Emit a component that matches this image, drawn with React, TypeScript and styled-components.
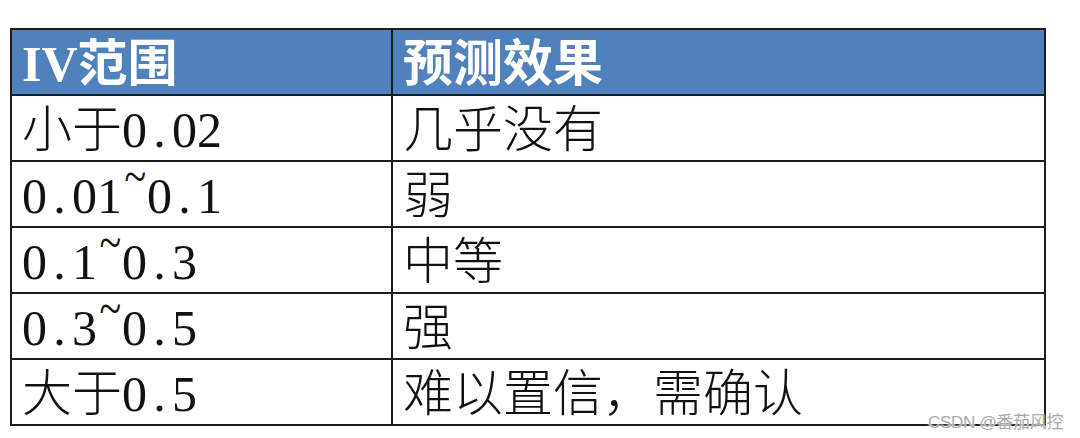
import React from "react"
import styled, { createGlobalStyle } from "styled-components"

const GlobalStyle = createGlobalStyle`
  html, body {
    margin: 0;
    padding: 0;
    background: #ffffff;
  }
`

const Page = styled.div`
  position: relative;
  width: 1080px;
  height: 438px;
  padding: 28px 0 0 10px;
  box-sizing: border-box;
  background: #ffffff;
  overflow: hidden;
`

const Table = styled.div`
  display: grid;
  grid-template-columns: 381px 653px;
  grid-auto-rows: 66px;
  border-top: 2px solid #1c1c1c;
  border-left: 2px solid #1c1c1c;
  width: max-content;
`

const Cell = styled.div<{ $head?: boolean }>`
  display: flex;
  align-items: center;
  box-sizing: border-box;
  padding: 4px 0 0 10px;
  border-right: 2px solid #1c1c1c;
  border-bottom: 2px solid #1c1c1c;
  background: ${(p) => (p.$head ? "#4f81bd" : "#ffffff")};
  color: ${(p) => (p.$head ? "#ffffff" : "#111111")};
  font-family: "Liberation Serif", "Noto Sans CJK SC", serif;
  font-size: 50px;
  font-weight: ${(p) => (p.$head ? 700 : 300)};
  line-height: 1;
  white-space: nowrap;
`

// half-width cell for digits and punctuation, like a SimSun grid
const Glyph = styled.span<{ $half: boolean }>`
  display: inline-block;
  width: ${(p) => (p.$half ? "0.5em" : "auto")};
  text-align: ${(p) => (p.$half ? "center" : "left")};
`

// SimSun draws the tilde high, at the top of the digits
const Tilde = styled.span`
  display: inline-block;
  width: 0.5em;
  text-align: center;
  line-height: 0.4;
  transform: translateY(-0.4em) scaleX(0.8);
`

const Watermark = styled.div`
  position: absolute;
  left: 928px;
  top: 408px;
  font-family: "Liberation Sans", "Noto Sans CJK SC", sans-serif;
  font-size: 17px;
  color: #a9a9a9;
  text-shadow: 0 0 2px #ffffff, 0 0 2px #ffffff;
  letter-spacing: -0.3px;
`

const rows = [
  ["小于0.02", "几乎没有"],
  ["0.01~0.1", "弱"],
  ["0.1~0.3", "中等"],
  ["0.3~0.5", "强"],
  ["大于0.5", "难以置信，需确认"],
]

const Text: React.FC<{ value: string }> = ({ value }) => (
  <>
    {Array.from(value).map((ch, i) =>
      ch === "~" ? (
        <Tilde key={i}>{ch}</Tilde>
      ) : (
        <Glyph key={i} $half={/[0-9.]/.test(ch)}>
          {ch}
        </Glyph>
      )
    )}
  </>
)

const App: React.FC = () => {
  return (
    <Page>
      <GlobalStyle />
      <Table>
        <Cell $head>
          <Text value="IV范围" />
        </Cell>
        <Cell $head>
          <Text value="预测效果" />
        </Cell>
        {rows.map(([range, effect]) => (
          <React.Fragment key={range}>
            <Cell>
              <Text value={range} />
            </Cell>
            <Cell>
              <Text value={effect} />
            </Cell>
          </React.Fragment>
        ))}
      </Table>
      <Watermark>CSDN @番茄风控</Watermark>
    </Page>
  )
}

export default App
